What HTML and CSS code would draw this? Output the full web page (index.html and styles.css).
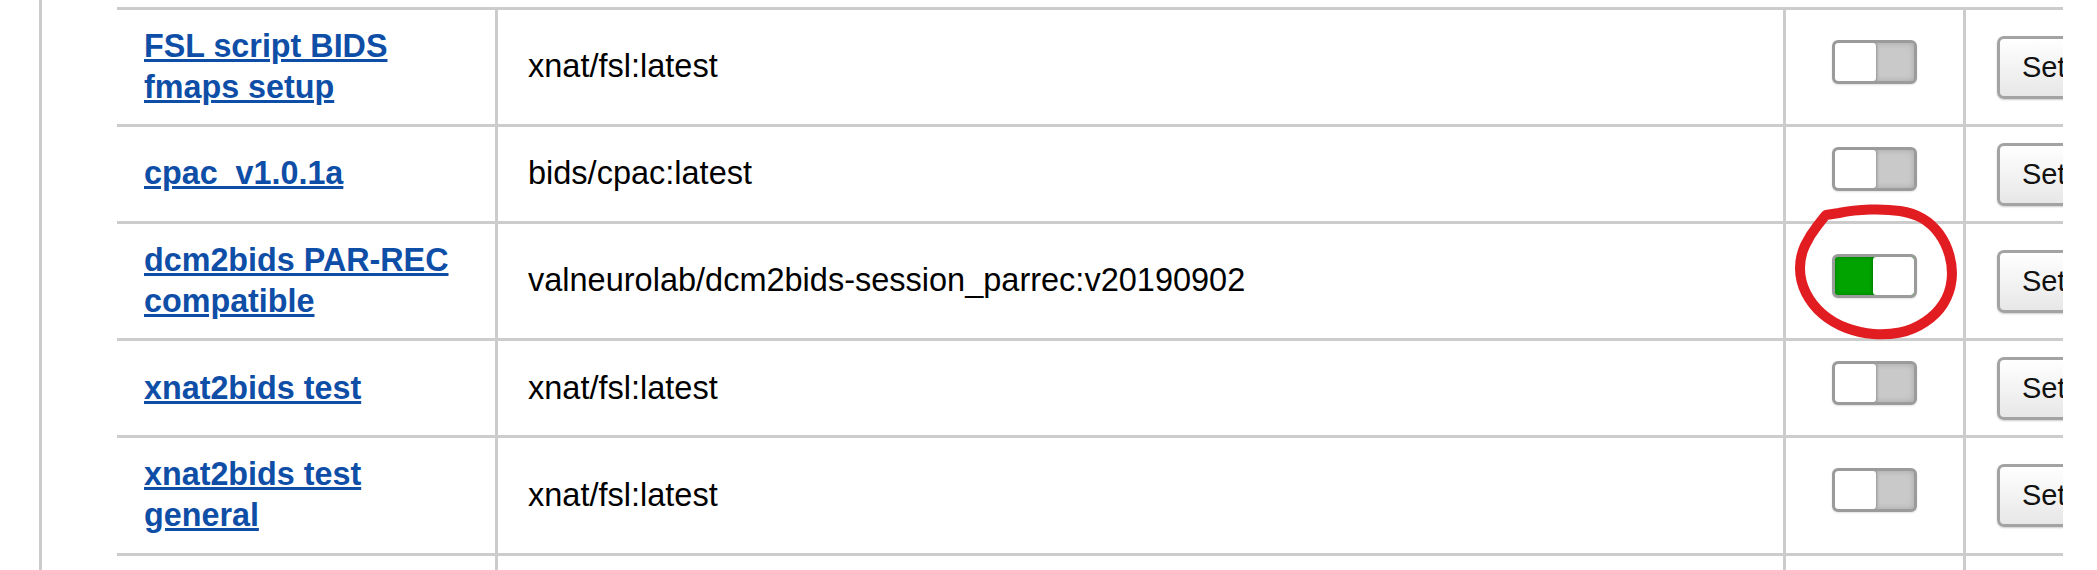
FILE: index.html
```html
<!DOCTYPE html>
<html lang="en">
<head>
<meta charset="utf-8">
<title>Commands</title>
<link rel="stylesheet" href="styles.css">
</head>
<body>
<div class="page">
  <div class="panel">
    <div class="clip">
      <table class="cmd-table">
        <tbody>
          <tr>
            <td class="c-name"><a href="#">FSL script BIDS fmaps setup</a></td>
            <td class="c-image">xnat/fsl:latest</td>
            <td class="c-toggle"><div class="toggle"><span class="knob"></span></div></td>
            <td class="c-action"><button class="btn">Set Defaults</button></td>
          </tr>
          <tr>
            <td class="c-name"><a href="#">cpac_v1.0.1a</a></td>
            <td class="c-image">bids/cpac:latest</td>
            <td class="c-toggle"><div class="toggle"><span class="knob"></span></div></td>
            <td class="c-action"><button class="btn">Set Defaults</button></td>
          </tr>
          <tr>
            <td class="c-name"><a href="#">dcm2bids PAR-REC compatible</a></td>
            <td class="c-image">valneurolab/dcm2bids-session_parrec:v20190902</td>
            <td class="c-toggle"><div class="toggle on"><span class="knob"></span></div></td>
            <td class="c-action"><button class="btn">Set Defaults</button></td>
          </tr>
          <tr>
            <td class="c-name"><a href="#">xnat2bids test</a></td>
            <td class="c-image">xnat/fsl:latest</td>
            <td class="c-toggle"><div class="toggle"><span class="knob"></span></div></td>
            <td class="c-action"><button class="btn">Set Defaults</button></td>
          </tr>
          <tr>
            <td class="c-name"><a href="#">xnat2bids test general</a></td>
            <td class="c-image">xnat/fsl:latest</td>
            <td class="c-toggle"><div class="toggle"><span class="knob"></span></div></td>
            <td class="c-action"><button class="btn">Set Defaults</button></td>
          </tr>
          <tr>
            <td class="c-name"><a href="#">dcm2bids session</a></td>
            <td class="c-image">xnat/dcm2bids-session:latest</td>
            <td class="c-toggle"><div class="toggle"><span class="knob"></span></div></td>
            <td class="c-action"><button class="btn">Set Defaults</button></td>
          </tr>
        </tbody>
      </table>
    </div>
  </div>
  <svg class="annotation" width="175" height="146" viewBox="0 0 175 146" aria-hidden="true">
    <path d="M36,12 L49,10 Q63,7 80,6.5 Q97,6 110,8 Q123,10 132.5,15.5 Q142,21 149,30.5 Q156,40 159.5,52.5 Q163,65 161.5,77.5 Q160,90 153.5,100.5 Q147,111 135,119 Q123,127 110,129.5 Q97,132 83.5,131 Q70,130 56.5,125 Q43,120 32.5,111 Q22,102 16,90 Q10,78 10,65.5 Q10,53 15,42.5 Q20,32 27.5,22.5 L35,13" fill="none" stroke="#e21d22" stroke-width="10" stroke-linecap="round" stroke-linejoin="round"/>
  </svg>
</div>
</body>
</html>
```

FILE: styles.css
```css
html, body {
  margin: 0;
  padding: 0;
  background: #ffffff;
}

.page {
  position: relative;
  width: 2097px;
  height: 570px;
  overflow: hidden;
  font-family: "Liberation Sans", Arial, sans-serif;
}

.panel {
  box-sizing: border-box;
  height: 570px;
  margin-left: 39px;
  border-left: 3px solid #cccccc;
  padding-left: 75px;
  padding-top: 7px;
}

.clip {
  width: 1946px;
  overflow: hidden;
}

.cmd-table {
  border-collapse: separate;
  border-spacing: 0;
  border-top: 3px solid #cccccc;
  table-layout: fixed;
  width: 2099px;
}

.cmd-table td {
  box-sizing: border-box;
  vertical-align: middle;
  border-bottom: 3px solid #cccccc;
  padding-top: 15.5px;
  padding-bottom: 15.5px;
  font-size: 32.5px;
  line-height: 41.6px;
  color: #000000;
}

.c-name {
  width: 378px;
  padding-left: 27px;
  padding-right: 27px;
}

.c-name a {
  font-size: 32.3px;
  font-weight: bold;
  color: #0e4ea7;
  text-decoration: underline;
}

.c-image {
  width: 1288px;
  border-left: 3px solid #cccccc;
  padding-left: 30px;
  padding-right: 20px;
  white-space: nowrap;
}

.c-toggle {
  width: 180px;
  border-left: 3px solid #cccccc;
  padding-left: 0;
  padding-right: 0;
}

.c-action {
  width: 253px;
  border-left: 3px solid #cccccc;
  padding-left: 31px;
  padding-right: 0;
  white-space: nowrap;
}

.toggle {
  box-sizing: border-box;
  display: flex;
  width: 85px;
  height: 44px;
  margin: 0 auto 11px;
  border: 3px solid #9b9b9b;
  border-radius: 6px;
  overflow: hidden;
  background: #c9c9c9;
  box-shadow: inset 0 0 6px rgba(0, 0, 0, 0.18), 0 1px 2px rgba(0, 0, 0, 0.12);
}

.toggle .knob {
  display: block;
  width: 41px;
  height: 100%;
  background: #ffffff;
  border-radius: 3px;
  box-shadow: 1px 0 3px rgba(0, 0, 0, 0.28);
}

.toggle.on {
  justify-content: flex-end;
  background: #00a300;
  box-shadow: inset 0 0 5px rgba(0, 60, 0, 0.35), 0 1px 2px rgba(0, 0, 0, 0.12);
}

.toggle.on .knob {
  box-shadow: -1px 0 3px rgba(0, 0, 0, 0.25);
}

.btn {
  box-sizing: border-box;
  height: 63px;
  padding: 0 22px;
  border: 3px solid #a3a3a3;
  border-radius: 7px;
  background: linear-gradient(#ffffff, #e7e7e7);
  box-shadow: 0 1px 2px rgba(0, 0, 0, 0.2);
  font-family: "Liberation Sans", Arial, sans-serif;
  font-size: 29px;
  color: #111111;
  vertical-align: middle;
}

.annotation {
  position: absolute;
  left: 1790px;
  top: 203px;
}
```
